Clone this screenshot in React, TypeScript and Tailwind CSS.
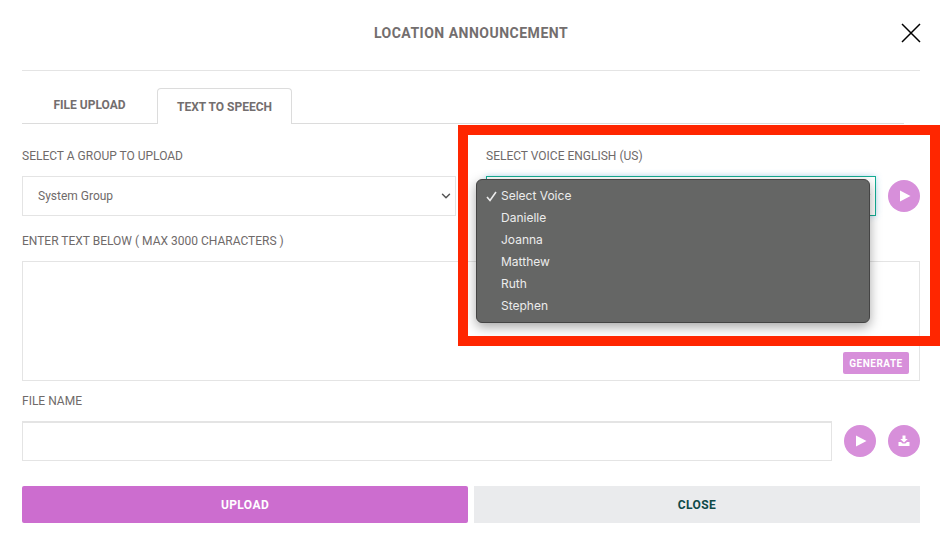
import React from 'react'
import { ChevronDown } from 'lucide-react'

const voices = ['Select Voice', 'Danielle', 'Joanna', 'Matthew', 'Ruth', 'Stephen']

function RoundButton({ children }: { children: React.ReactNode }) {
  return (
    <button className="w-8 h-8 shrink-0 rounded-full bg-[#d78fda] flex items-center justify-center">
      {children}
    </button>
  )
}

function PlayIcon() {
  return (
    <svg width="12" height="12" viewBox="0 0 12 12" className="ml-[1px]">
      <path d="M1 0.5 L11.5 6 L1 11.5 Z" fill="#fff" />
    </svg>
  )
}

function DownloadIcon() {
  return (
    <svg width="12" height="12" viewBox="0 0 12 12">
      <path d="M4.5 0.5 H7.5 V4 H9.8 L6 7.6 L2.2 4 H4.5 Z" fill="#fff" />
      <path d="M0.5 7 H3 L4.6 8.6 H7.4 L9 7 H11.5 V11 H0.5 Z" fill="#fff" />
    </svg>
  )
}

export default function App() {
  return (
    <div className="relative w-[944px] h-[542px] overflow-hidden bg-white pl-[22px] pr-[24px] font-['Roboto',sans-serif] text-[#6f6a6a]">
      <div className="relative h-[71px] border-b border-[#e4e4e4] flex items-center justify-center pb-[3px]">
        <h1 className="text-[14px] font-bold tracking-[0.5px] text-[#736e6e]">LOCATION ANNOUNCEMENT</h1>
        <svg width="20" height="20" viewBox="0 0 20 20" className="absolute right-[-1px] top-[23px]">
          <path d="M1 1 L19 19 M19 1 L1 19" stroke="#000" strokeWidth="1.5" fill="none" />
        </svg>
      </div>

      <div className="mt-[17px] mr-[16px] h-[36px] flex items-end border-b border-[#dcdcdc]">
        <div className="w-[135px] h-full flex items-center justify-center pb-[1px] text-xs font-bold text-[#736e6e]">FILE UPLOAD</div>
        <div className="w-[135px] h-[36px] -mb-px bg-white border border-b-0 border-[#dcdcdc] rounded-t-[4px] flex items-center justify-center pt-[1px] text-xs font-bold text-[#736e6e]">TEXT TO SPEECH</div>
      </div>

      <div className="mt-[24px] flex">
        <div className="w-[434px]">
          <label className="block h-[16px] text-xs leading-[16px]">SELECT A GROUP TO UPLOAD</label>
          <div className="mt-[12px] h-[40px] border border-[#e4e4e4] flex items-center justify-between pl-[15px] pr-[2px] text-xs">
            <span>System Group</span>
            <ChevronDown className="w-[14px] h-[14px] text-[#555]" strokeWidth={2.5} />
          </div>
        </div>
        <div className="ml-[30px] flex-1">
          <label className="block h-[16px] text-xs leading-[16px]">SELECT VOICE ENGLISH (US)</label>
          <div className="mt-[12px] flex items-center gap-[12px]">
            <div className="flex-1 h-[40px] border border-[#14ad93] shadow-[0_0_6px_rgba(100,180,230,0.45)] flex items-center justify-end pr-[2px]">
              <ChevronDown className="w-[14px] h-[14px] text-[#555]" strokeWidth={2.5} />
            </div>
            <RoundButton><PlayIcon /></RoundButton>
          </div>
        </div>
      </div>

      <label className="block mt-[17px] h-[16px] text-xs leading-[16px]">ENTER TEXT BELOW ( MAX 3000 CHARACTERS )</label>
      <div className="relative mt-[12px] h-[120px] border border-[#e4e4e4]">
        <button className="absolute right-[10px] bottom-[6px] w-[66px] h-[22px] rounded-[2px] bg-[#d78fda] text-white text-[10px] font-bold tracking-[0.5px]">GENERATE</button>
      </div>

      <label className="block mt-[12px] h-[16px] text-xs leading-[16px]">FILE NAME</label>
      <div className="mt-[12px] flex items-center gap-[12px]">
        <div className="flex-1 h-[40px] border border-[#e4e4e4] border-t-2" />
        <RoundButton><PlayIcon /></RoundButton>
        <RoundButton><DownloadIcon /></RoundButton>
      </div>

      <div className="mt-[25px] flex gap-[6px]">
        <button className="flex-1 h-[37px] rounded-[2px] bg-[#cc6dcf] text-white text-xs font-bold tracking-[0.4px]">UPLOAD</button>
        <button className="flex-1 h-[37px] bg-[#eaebed] text-[#0e4a48] text-xs font-bold tracking-[0.4px]">CLOSE</button>
      </div>

      {/* native select popup, open over the voice field */}
      <div className="absolute left-[476px] top-[179px] w-[394px] h-[144px] py-[5px] rounded-[6px] bg-[#656665] border border-[#444] shadow-[0_4px_12px_rgba(0,0,0,0.35)] text-[#ececec] text-[12px] font-['Inter',sans-serif]">
        {voices.map((v, i) => (
          <div key={v} className="relative h-[22px] pl-[24px] flex items-center">
            {i === 0 && (
              <svg width="11" height="11" viewBox="0 0 11 11" className="absolute left-[9px] top-[6px]">
                <path d="M1 6 L4 9.5 L10 1" stroke="#ececec" strokeWidth="1.6" fill="none" />
              </svg>
            )}
            {v}
          </div>
        ))}
      </div>

      {/* red annotation box */}
      <div className="absolute left-[458px] top-[125px] w-[482px] h-[221px] border-[10px] border-[#ff2600] pointer-events-none" />
    </div>
  )
}
